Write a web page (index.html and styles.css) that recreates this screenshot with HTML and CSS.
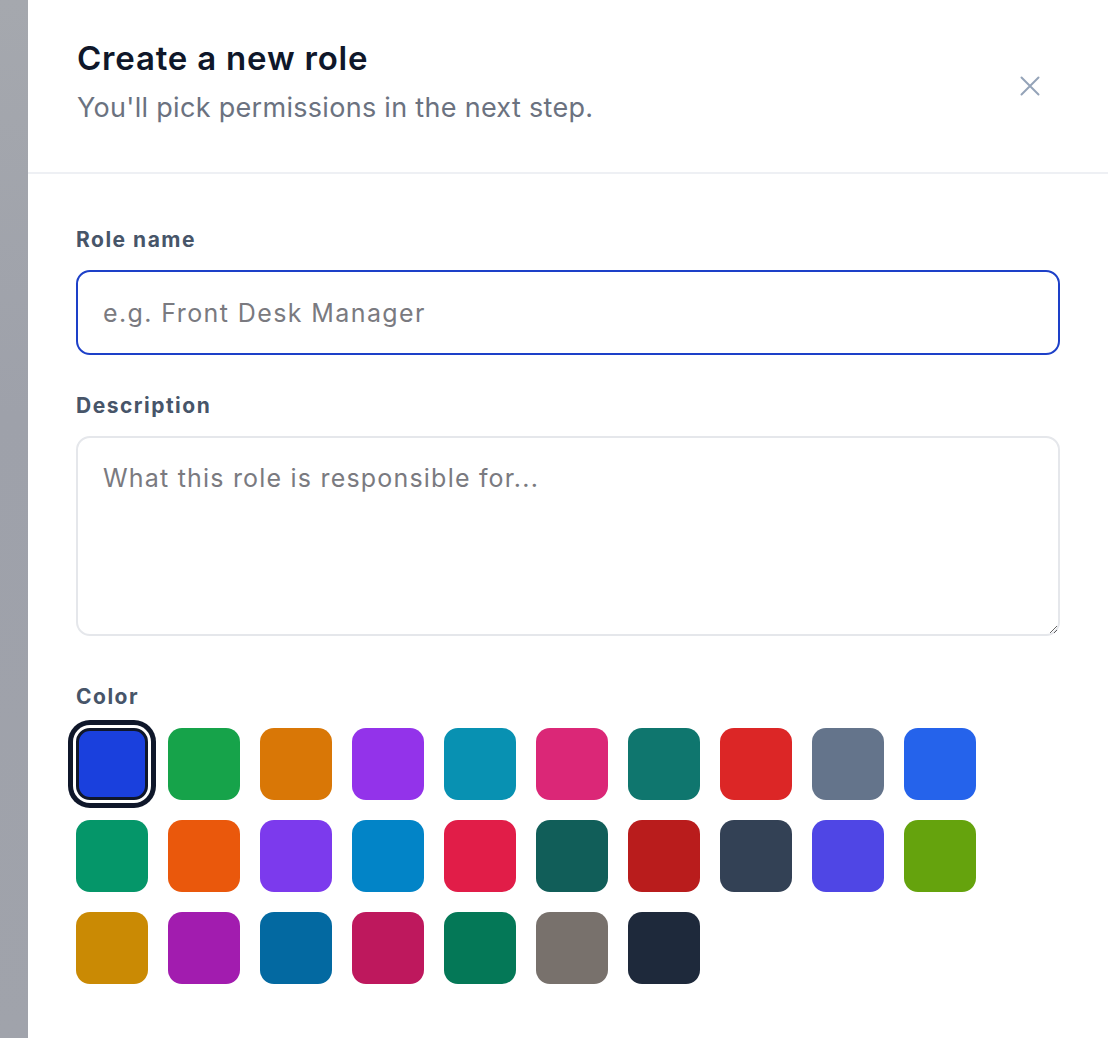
FILE: index.html
```html
<!DOCTYPE html>
<html lang="en">
<head>
<meta charset="utf-8">
<title>Create a new role</title>
<link rel="stylesheet" href="styles.css">
</head>
<body>
<div class="screen">
  <div class="backdrop"></div>
  <aside class="panel">
    <header class="panel-header">
      <div class="heading">
        <h1 class="title">Create a new role</h1>
        <p class="subtitle">You'll pick permissions in the next step.</p>
      </div>
      <button class="close" aria-label="Close">
        <svg width="24" height="24" viewBox="0 0 24 24" fill="none" stroke="currentColor" stroke-width="2" stroke-linecap="round"><path d="M3.5 3.5L20.5 20.5M20.5 3.5L3.5 20.5"/></svg>
      </button>
    </header>
    <div class="panel-body">
      <div class="field">
        <label class="label" for="name">Role name</label>
        <input id="name" class="input focused" type="text" placeholder="e.g. Front Desk Manager">
      </div>
      <div class="field">
        <label class="label" for="desc">Description</label>
        <textarea id="desc" class="input textarea" placeholder="What this role is responsible for..."></textarea>
      </div>
      <div class="field color-field">
        <span class="label">Color</span>
        <div class="swatches">
          <span class="swatch selected" style="background:#1a40dd"></span>
          <span class="swatch" style="background:#16a34a"></span>
          <span class="swatch" style="background:#d97706"></span>
          <span class="swatch" style="background:#9333ea"></span>
          <span class="swatch" style="background:#0891b2"></span>
          <span class="swatch" style="background:#db2777"></span>
          <span class="swatch" style="background:#0f766e"></span>
          <span class="swatch" style="background:#dc2626"></span>
          <span class="swatch" style="background:#64748b"></span>
          <span class="swatch" style="background:#2563eb"></span>
          <span class="swatch" style="background:#059669"></span>
          <span class="swatch" style="background:#ea580c"></span>
          <span class="swatch" style="background:#7c3aed"></span>
          <span class="swatch" style="background:#0284c7"></span>
          <span class="swatch" style="background:#e11d48"></span>
          <span class="swatch" style="background:#115e59"></span>
          <span class="swatch" style="background:#b91c1c"></span>
          <span class="swatch" style="background:#334155"></span>
          <span class="swatch" style="background:#4f46e5"></span>
          <span class="swatch" style="background:#65a30d"></span>
          <span class="swatch" style="background:#ca8a04"></span>
          <span class="swatch" style="background:#a21caf"></span>
          <span class="swatch" style="background:#0369a1"></span>
          <span class="swatch" style="background:#be185d"></span>
          <span class="swatch" style="background:#047857"></span>
          <span class="swatch" style="background:#78716c"></span>
          <span class="swatch" style="background:#1e293b"></span>
        </div>
      </div>
    </div>
  </aside>
</div>
</body>
</html>
```

FILE: styles.css
```css
* { box-sizing: border-box; }
html, body { margin: 0; padding: 0; height: 100%; }
body {
  font-family: Inter, "Noto Sans", "Liberation Sans", sans-serif;
  background: #ffffff;
  color: #111827;
}
.screen {
  display: flex;
  min-height: 1038px;
}
.backdrop {
  width: 28px;
  flex: none;
  background: linear-gradient(180deg, #a5a8ae 0%, #9ea1aa 40%, #a0a3ab 100%);
}
.panel {
  flex: 1;
  background: #ffffff;
  display: flex;
  flex-direction: column;
}
.panel-header {
  display: flex;
  justify-content: space-between;
  align-items: flex-start;
  padding: 38px 66px 47px 49px;
  border-bottom: 2px solid #eef0f4;
}
.title {
  margin: 0 0 13px;
  font-size: 33px;
  line-height: 40px;
  font-weight: 600;
  color: #0f172a;
  letter-spacing: 0.8px;
}
.subtitle {
  margin: 0;
  font-size: 27px;
  line-height: 34px;
  color: #6b7280;
  letter-spacing: 0.3px;
}
.close {
  margin-top: 36px;
  padding: 0;
  border: 0;
  background: none;
  color: #94a3b8;
  width: 24px;
  height: 24px;
  display: flex;
}
.panel-body {
  padding: 52px 48px 40px 48px;
  display: flex;
  flex-direction: column;
  gap: 37px;
}
.field {
  display: flex;
  flex-direction: column;
}
.label {
  font-size: 21px;
  line-height: 28px;
  font-weight: 700;
  color: #475569;
  letter-spacing: 1.5px;
  margin-bottom: 16px;
}
.input {
  display: block;
  width: 100%;
  font-family: inherit;
  font-size: 25px;
  letter-spacing: 1.4px;
  color: #111827;
  background: #fff;
  border: 2px solid #e5e7eb;
  border-radius: 14px;
  padding: 0 25px;
  outline: none;
}
.input::placeholder { color: #7a7a80; }
.focused {
  height: 85px;
  border-color: #1d40c8;
}
.textarea {
  height: 200px;
  padding: 24px 25px;
  line-height: 32px;
  letter-spacing: 1.2px;
  resize: vertical;
}
.color-field { margin-top: 10px; }
.color-field .label { margin-bottom: 17px; }
.swatches {
  display: grid;
  grid-template-columns: repeat(10, 72px);
  gap: 20px;
}
.swatch {
  width: 72px;
  height: 72px;
  border-radius: 14px;
  display: block;
}
.swatch.selected {
  border: 3px solid #0f172a;
  box-shadow: 0 0 0 3px #ffffff, 0 0 0 8px #0f172a;
}
```
